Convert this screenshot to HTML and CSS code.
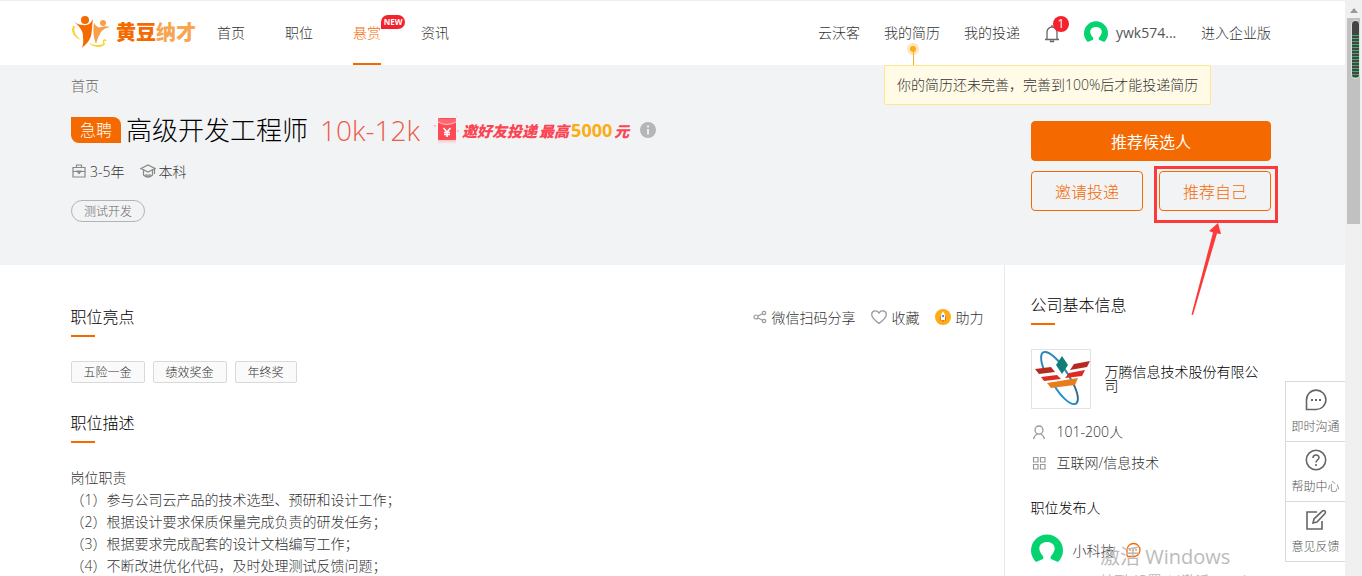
FILE: index.html
```html
<!DOCTYPE html>
<html lang="zh-CN">
  <head>
    <meta charset="UTF-8">
    <meta name="viewport" content="width=device-width, initial-scale=1.0">
    <link rel="stylesheet" href="styles.css">
    <title>高级开发工程师 - 黄豆纳才</title>
  </head>
  <body>
    <div class="page">
      <header class="header">
        <div class="shell header-row">
          <a class="logo" href="#">
            <svg width="40" height="34" viewBox="0 0 40 34">
              <path d="M2 10C-1 16 4 22 10 24C5 20 2 16 4 10Z" fill="#fdd32b"/>
              <path d="M17 27C24 32 31 32 34 28L33 25L36 25L34 23L32 24L32 28C28 30 22 29 17 27Z" fill="#fdd32b"/>
              <circle cx="14" cy="4" r="4" fill="#f56a00"/>
              <path d="M2 5C6 8 9 9 12 9C17 10 20 7 22 3C21 10 21 15 20 20C18 26 14 29 11 32C13 26 12 24 12 20C12 14 8 10 2 5Z" fill="#f56a00"/>
              <circle cx="32" cy="7" r="3" fill="#f7a04b"/>
              <path d="M23 7C25 10 27 12 30 11C34 10 36 10 39 11C34 12 31 14 29 18C27 21 26 24 25 28C22 20 22 13 23 7Z" fill="#f7a04b"/>
            </svg>
            <span class="logo-text">黄豆<em>纳才</em></span>
          </a>
          <nav class="nav">
            <a href="#">首页</a>
            <a href="#">职位</a>
            <a class="active" href="#">悬赏<span class="new">NEW</span></a>
            <a href="#">资讯</a>
          </nav>
          <div class="user-nav">
            <a href="#">云沃客</a>
            <div class="resume">
              <a href="#">我的简历</a>
              <div class="pin"></div>
              <div class="tip">你的简历还未完善，完善到100%后才能投递简历</div>
            </div>
            <a href="#">我的投递</a>
            <a class="bell" href="#" aria-label="消息">
              <svg width="16" height="20" viewBox="0 0 16 20" fill="none" stroke="#666" stroke-width="1.3">
                <path d="M1 16.5H15M3 16.5V9a5 5 0 0 1 10 0V16.500M8 2V4M6.500 17.500V18.500H9.500V17.500"/>
              </svg>
              <span class="count">1</span>
            </a>
            <a class="user" href="#">
              <svg width="24" height="24" viewBox="0 0 32 32">
                <path d="M5 28A16 16 0 1 1 27 28L20 25C19 23 20 22 21 21C27 13 22 8 16 8S5 13 11 21C12 22 13 23 12 25Z" fill="#04d36f"/>
              </svg>
              ywk574...
            </a>
            <a href="#">进入企业版</a>
          </div>
        </div>
      </header>

      <section class="banner">
        <div class="shell banner-row">
          <div class="job">
            <a class="crumb" href="#">首页</a>
            <div class="job-title">
              <span class="urgent">急聘</span>
              <h1>高级开发工程师</h1>
              <span class="salary">10k-12k</span>
              <div class="reward">
                <svg width="28" height="32" viewBox="0 0 28 32">
                  <defs>
                    <linearGradient id="fade" x2="0" y2="1">
                      <stop offset="0" stop-color="#fcb9bf"/>
                      <stop offset="1" stop-color="#f2f3f5"/>
                    </linearGradient>
                  </defs>
                  <rect x="6" y="25" width="18" height="5" fill="url(#fade)"/>
                  <rect x="6" y="4" width="18" height="22" rx="1" fill="#fc4a57"/>
                  <path d="M6 5V8Q15 13 24 8V5Z" fill="#ff6872"/>
                  <path d="M6 8Q15 13 24 8" stroke="#ffc0c2" fill="none"/>
                  <path d="M11.500 14L15 18L18.500 14M15 18V23M12 18.500H18M12 20.500H18" stroke="#fff" stroke-width="1.500" fill="none"/>
                  <path d="M1 11h3v2H2zM24 2h1v1h-1zM25 16h2v2h-2z" fill="#f9c5ca"/>
                </svg>
                <span>邀好友投递</span><span>最高</span><b>5000</b><span>元</span>
                <svg class="info" width="16" height="16" viewBox="0 0 16 16">
                  <circle cx="8" cy="8" r="8" fill="#b5b6b8"/>
                  <path d="M7 3.500h2v2H7zM7 7H9V12.500H7Z" fill="#eee"/>
                </svg>
              </div>
            </div>
            <div class="meta">
              <span>
                <svg width="16" height="16" viewBox="0 0 16 16" fill="none" stroke="#888" stroke-width="1.200">
                  <path d="M2 4.500H14V14H2ZM5.500 4.500V2H10.500V4.500M2 8.500H6M10 8.500H14"/>
                  <path d="M6 8H10L8 10.500Z" fill="#888"/>
                </svg>
                3-5年
              </span>
              <span>
                <svg width="16" height="16" viewBox="0 0 16 16" fill="none" stroke="#888" stroke-width="1.200">
                  <path d="M1 5.500L8 2L15 5.500L8 9ZM3.500 7V12Q8 16 12.500 12V7M14.500 6V11M5.500 11.500Q8 13 10.500 11.500"/>
                </svg>
                本科
              </span>
            </div>
            <span class="skill">测试开发</span>
          </div>
          <div class="apply">
            <button class="primary">推荐候选人</button>
            <button>邀请投递</button>
            <div class="marked">
              <button>推荐自己</button>
              <div class="mark"></div>
              <svg class="arrow" width="34" height="94" viewBox="0 0 34 94">
                <path d="M28 0L31 11L27 10.500L3 92L1.500 91.500L23 9.500L19 8Z" fill="#fc3a3a"/>
              </svg>
            </div>
          </div>
        </div>
      </section>

      <main class="shell content">
        <section class="detail">
          <div class="detail-head">
            <h2>职位亮点</h2>
            <div class="share">
              <a href="#">
                <svg width="14" height="14" viewBox="0 0 14 14" fill="none" stroke="#999" stroke-width="1.200">
                  <circle cx="3" cy="7" r="2"/><circle cx="11" cy="3" r="1.700"/><circle cx="11" cy="11" r="1.700"/>
                  <path d="M5 6L9.500 3.700M5 8L9.500 10.300"/>
                </svg>
                微信扫码分享
              </a>
              <a href="#">
                <svg width="16" height="16" viewBox="0 0 16 16" fill="none" stroke="#999" stroke-width="1.300">
                  <path d="M8 14.500C4 11.500 0.700 9 0.700 5.500C0.700 1.500 6 0.500 8 4C10 0.500 15.300 1.500 15.300 5.500C15.300 9 12 11.500 8 14.500Z"/>
                </svg>
                收藏
              </a>
              <a href="#">
                <svg width="16" height="16" viewBox="0 0 16 16">
                  <circle cx="8" cy="8" r="8" fill="#faad14"/>
                  <path d="M8 2.500C10.500 5 10.500 8 10 11H6C5.500 8 5.500 5 8 2.500Z" fill="#fff"/>
                  <path d="M5 8L6 7V11L5 12ZM11 8L10 7V11L11 12ZM7 11H9L8 13.500Z" fill="#f0642d"/>
                  <circle cx="8" cy="7" r="1.200" fill="#4b8bd8"/>
                </svg>
                助力
              </a>
            </div>
          </div>
          <div class="welfare">
            <span>五险一金</span>
            <span>绩效奖金</span>
            <span>年终奖</span>
          </div>
          <h2>职位描述</h2>
          <p class="desc">
            岗位职责<br>
            （1）参与公司云产品的技术选型、预研和设计工作；<br>
            （2）根据设计要求保质保量完成负责的研发任务；<br>
            （3）根据要求完成配套的设计文档编写工作；<br>
            （4）不断改进优化代码，及时处理测试反馈问题；
          </p>
        </section>

        <aside class="company">
          <h2>公司基本信息</h2>
          <a class="company-name" href="#">
            <svg width="60" height="60" viewBox="0 0 60 60">
              <rect x="0.500" y="0.500" width="59" height="59" fill="#fff" stroke="#e3e3e3"/>
              <path d="M13 21C8 8 10 2 15 3C23 5 33 18 41 32" fill="none" stroke="#2e86b8" stroke-width="2"/>
              <path d="M23 36C30 48 39 56 44 55C49 54 47 44 42 34" fill="none" stroke="#2391c9" stroke-width="2"/>
              <path d="M45 54C49 50 46 42 42 34" fill="none" stroke="#555" stroke-width="1"/>
              <path d="M31 7L37 16L31 25L25 16Z" fill="#0f7e78"/>
              <path d="M4 20L20 18L24 23L8 25ZM43 15L59 12L56 18L39 21Z" fill="#b72a22"/>
              <path d="M10 28L26 26L30 30L13 32ZM38 24L54 21L51 27L34 29Z" fill="#de2a20"/>
              <path d="M16 34L47 29L44 36L20 39Z" fill="#e97d1b"/>
            </svg>
            <span>万腾信息技术股份有限公司</span>
          </a>
          <ul class="facts">
            <li>
              <svg width="16" height="16" viewBox="0 0 16 16" fill="none" stroke="#999" stroke-width="1.300">
                <circle cx="8" cy="6" r="4"/><path d="M2.500 15Q3.500 11 6.500 10M13.500 15Q12.500 11 9.500 10"/>
              </svg>
              101-200人
            </li>
            <li>
              <svg width="16" height="16" viewBox="0 0 16 16" fill="none" stroke="#999" stroke-width="1.200">
                <path d="M2.500 2.500H7V7H2.500ZM9.500 2.500H14V7H9.500ZM2.500 9.500H7V14H2.500ZM9.500 9.500H14V14H9.500Z"/>
              </svg>
              互联网/信息技术
            </li>
          </ul>
          <h3>职位发布人</h3>
          <div class="publisher">
            <svg width="32" height="32" viewBox="0 0 32 32">
              <path d="M5 28A16 16 0 1 1 27 28L20 25C19 23 20 22 21 21C27 13 22 8 16 8S5 13 11 21C12 22 13 23 12 25Z" fill="#04d36f"/>
            </svg>
            <span>小科技</span>
            <svg width="16" height="16" viewBox="0 0 16 16">
              <path d="M2 14V8A6.500 6.500 0 1 1 8 14.500H2" fill="none" stroke="#f56a00" stroke-width="1.300"/>
              <path d="M4 7.500h2v1H4zM7 7.500h2v1H7zM10 7.500h2v1h-2z" fill="#f56a00"/>
            </svg>
          </div>
        </aside>
      </main>

      <div class="toolbar">
        <a href="#">
          <svg width="24" height="24" viewBox="0 0 24 24" fill="none" stroke="#666" stroke-width="1.600">
            <path d="M2.500 21.500V12A9.700 9.700 0 1 1 12 21.500Z"/>
            <path d="M7 12h2M11 12h2M15 12h2" stroke-width="2"/>
          </svg>
          即时沟通
        </a>
        <a href="#">
          <svg width="24" height="24" viewBox="0 0 24 24" fill="none" stroke="#666" stroke-width="1.600">
            <circle cx="12" cy="12" r="9.700"/>
            <path d="M9 10C9 6 15 6 15 9.500C15 12 12 12 12 14.500M12 16V18"/>
          </svg>
          帮助中心
        </a>
        <a href="#">
          <svg width="24" height="24" viewBox="0 0 24 24" fill="none" stroke="#666" stroke-width="1.600">
            <path d="M13 4H3V21H18V13M9 15L10 11L18.500 3Q20 2 21 3T21 5.500L13 14Z"/>
          </svg>
          意见反馈
        </a>
      </div>

      <div class="watermark">
        <strong>激活 Windows</strong>
        转到"设置"以激活 Windows。
      </div>
    </div>

    <div class="scrollbar">
      <div class="scroll-up"></div>
      <div class="thumb"></div>
      <div class="meter"></div>
    </div>
  </body>
</html>
```
FILE: styles.css
```css
* {
  box-sizing: border-box;
}

body {
  display: flex;
  height: 100vh;
  margin: 0;
  overflow: hidden;
  font-family: "Open Sans", "Noto Sans CJK SC", sans-serif;
  font-size: 14px;
  font-weight: 300;
  color: #333;
  background-color: #fff;
}

a {
  color: inherit;
  text-decoration: none;
}

h1, h2, h3, p, ul {
  margin: 0;
  padding: 0;
  font-weight: 300;
}

svg {
  flex: none;
}

.page {
  position: relative;
  flex: 1;
  min-width: 0;
  overflow: hidden;
}

.shell {
  width: calc(100% - 80px);
  max-width: 1200px;
  margin: 0 auto;
}

.header,
.banner {
  padding-right: 3px;
}

/* header */
.header {
  height: 65px;
  border-top: 1px solid #eee;
}

.header-row {
  display: flex;
  line-height: 64px;
  white-space: nowrap;
}

.logo {
  display: flex;
  align-items: center;
  gap: 5px;
  margin-right: 21px;
}

.logo-text {
  font-size: 20px;
  font-weight: 900;
  color: #f56a00;
}

.logo-text em {
  font-style: normal;
  color: #f7a550;
}

.nav {
  display: flex;
  gap: 40px;
}

.nav a {
  position: relative;
  height: 64px;
}

.nav .active {
  color: #f56a00;
  border-bottom: 2px solid #f56a00;
}

.new {
  position: absolute;
  left: 28px;
  top: 14px;
  width: 24px;
  border-radius: 7px 7px 7px 0;
  background-color: #f5222d;
  color: #fff;
  font-size: 8px;
  font-weight: 700;
  line-height: 14px;
  text-align: center;
}

.user-nav {
  display: flex;
  gap: 24px;
  margin-left: auto;
}

.resume,
.bell {
  position: relative;
}

.pin {
  position: absolute;
  left: 23px;
  top: 42px;
  width: 12px;
  height: 12px;
  border: 3px solid #fde7ba;
  border-radius: 50%;
  background-color: #faad14;
}

.pin::after {
  content: "";
  position: absolute;
  left: 3px;
  top: 6px;
  width: 1px;
  height: 13px;
  background-color: #faad14;
}

.tip {
  position: absolute;
  left: 0;
  top: 64px;
  z-index: 2;
  padding: 0 12px;
  border: 1px solid #ffe58f;
  border-radius: 2px;
  background-color: #fffbe6;
  line-height: 38px;
}

.bell {
  display: flex;
  align-items: center;
}

.count {
  position: absolute;
  left: 9px;
  top: 15px;
  width: 16px;
  border-radius: 50%;
  background-color: #f5222d;
  color: #fff;
  font-size: 12px;
  font-weight: 400;
  line-height: 16px;
  text-align: center;
}

.user {
  display: flex;
  align-items: center;
  gap: 8px;
  min-width: 93px;
  color: #555;
  font-weight: 400;
}

/* job banner */
.banner {
  min-height: 200px;
  background-color: #f2f3f5;
}

.banner-row,
.detail-head {
  display: flex;
  justify-content: space-between;
}

.crumb {
  display: block;
  color: #666;
  line-height: 42px;
}

.job-title {
  display: flex;
  align-items: center;
  height: 46px;
  white-space: nowrap;
}

.urgent {
  padding: 0 9px;
  margin-right: 5px;
  border-radius: 0 8px 0 8px;
  background-color: #f56a00;
  color: #fff;
  font-size: 16px;
  line-height: 26px;
}

h1 {
  font-size: 26px;
  line-height: 40px;
  color: #000;
}

.salary {
  margin: 0 12px;
  font-size: 28px;
  line-height: 40px;
  color: #ed5a48;
}

.reward {
  display: flex;
  align-items: center;
  gap: 2px;
  color: #fc4453;
  font-size: 15px;
  font-style: italic;
  font-weight: 900;
}

.reward b {
  color: #faad14;
  font-size: 18px;
  font-style: normal;
  font-weight: 700;
}

.info {
  margin-left: 9px;
}

.meta {
  display: flex;
  gap: 15px;
  height: 36px;
}

.meta span,
.share a {
  display: flex;
  align-items: center;
  gap: 3px;
}

.skill {
  display: inline-block;
  height: 22px;
  margin-top: 11px;
  padding: 0 12px;
  border: 1px solid #b3b3b3;
  border-radius: 11px;
  color: #666;
  font-size: 12px;
  line-height: 22px;
}

.apply {
  display: grid;
  grid-template-columns: 112px 112px;
  grid-auto-rows: 40px;
  gap: 10px 16px;
  padding-top: 56px;
}

button {
  width: 100%;
  height: 40px;
  padding: 0;
  border: 1px solid #f56a00;
  border-radius: 4px;
  background-color: transparent;
  color: #f56a00;
  font: inherit;
  font-size: 16px;
  cursor: pointer;
}

.primary {
  grid-column: span 2;
  background-color: #f56a00;
  color: #fff;
  font-weight: 400;
}

.marked {
  position: relative;
}

.mark {
  position: absolute;
  inset: -5px -7px -12px -5px;
  border: 3px solid #fc3a3a;
  pointer-events: none;
}

.arrow {
  position: absolute;
  left: 31px;
  top: 52px;
  z-index: 1;
}

/* content */
.content {
  display: flex;
  position: relative;
  right: 2px;
}

.detail {
  flex: 1;
  padding: 40px 20px 0 0;
}

h2 {
  font-size: 16px;
  line-height: 24px;
  color: #000;
}

h2::after {
  content: "";
  display: block;
  width: 24px;
  height: 2px;
  margin-top: 6px;
  background-color: #f56a00;
}

.share {
  display: flex;
  gap: 15px;
  height: 24px;
}

.share a {
  gap: 5px;
}

.welfare {
  display: flex;
  gap: 8px;
  margin: 24px 0 28px;
}

.welfare span {
  height: 22px;
  padding: 0 12px;
  border: 1px solid #d9d9d9;
  border-radius: 2px;
  background-color: #fafafa;
  font-size: 12px;
  line-height: 22px;
}

.desc {
  margin-top: 24px;
  line-height: 22px;
}

.company {
  width: 267px;
  min-height: 311px;
  padding: 28px 0 0 26px;
  border-left: 1px solid #e8e8e8;
}

.company-name {
  display: flex;
  align-items: center;
  gap: 14px;
  margin: 24px 0 7px;
  color: #000;
  line-height: 14px;
}

.facts {
  list-style: none;
  line-height: 31px;
}

.facts li {
  display: flex;
  align-items: center;
  gap: 10px;
}

h3 {
  margin: 19px 0 15px;
  font-size: 14px;
  line-height: 22px;
  color: #000;
}

.publisher {
  display: flex;
  align-items: center;
  gap: 10px;
}

/* floating parts */
.toolbar {
  position: absolute;
  right: 0;
  bottom: 14px;
  width: 60px;
  border: 1px solid #d9d9d9;
  border-width: 1px 0 0 1px;
  background-color: #fff;
}

.toolbar a {
  display: flex;
  flex-direction: column;
  align-items: center;
  gap: 5px;
  height: 60px;
  padding-top: 6px;
  border-bottom: 1px solid #d9d9d9;
  color: #555;
  font-size: 12px;
  line-height: 20px;
}

.watermark {
  position: absolute;
  left: 1100px;
  top: 543px;
  color: #bbb;
  font-weight: 400;
  line-height: 20px;
  white-space: nowrap;
}

.watermark strong {
  display: block;
  font-size: 20px;
  font-weight: 400;
  line-height: 28px;
}

/* scrollbar */
.scrollbar {
  position: relative;
  width: 17px;
  background-color: #f0f0f0;
}

.scroll-up {
  width: 8px;
  margin: 8px auto 5px;
  border: 4px solid transparent;
  border-top-width: 0;
  border-bottom: 5px solid #999;
}

.thumb {
  width: 13px;
  height: 206px;
  margin-left: 2px;
  background-color: #c1c1c1;
}

.meter {
  position: absolute;
  left: 6px;
  top: 20px;
  width: 9px;
  height: 59px;
  border: 1px solid #ddd;
  border-radius: 4px;
  background: linear-gradient(#444 14px, transparent 14px), repeating-linear-gradient(#444 0 2px, #3fae68 2px 3px);
}
```
